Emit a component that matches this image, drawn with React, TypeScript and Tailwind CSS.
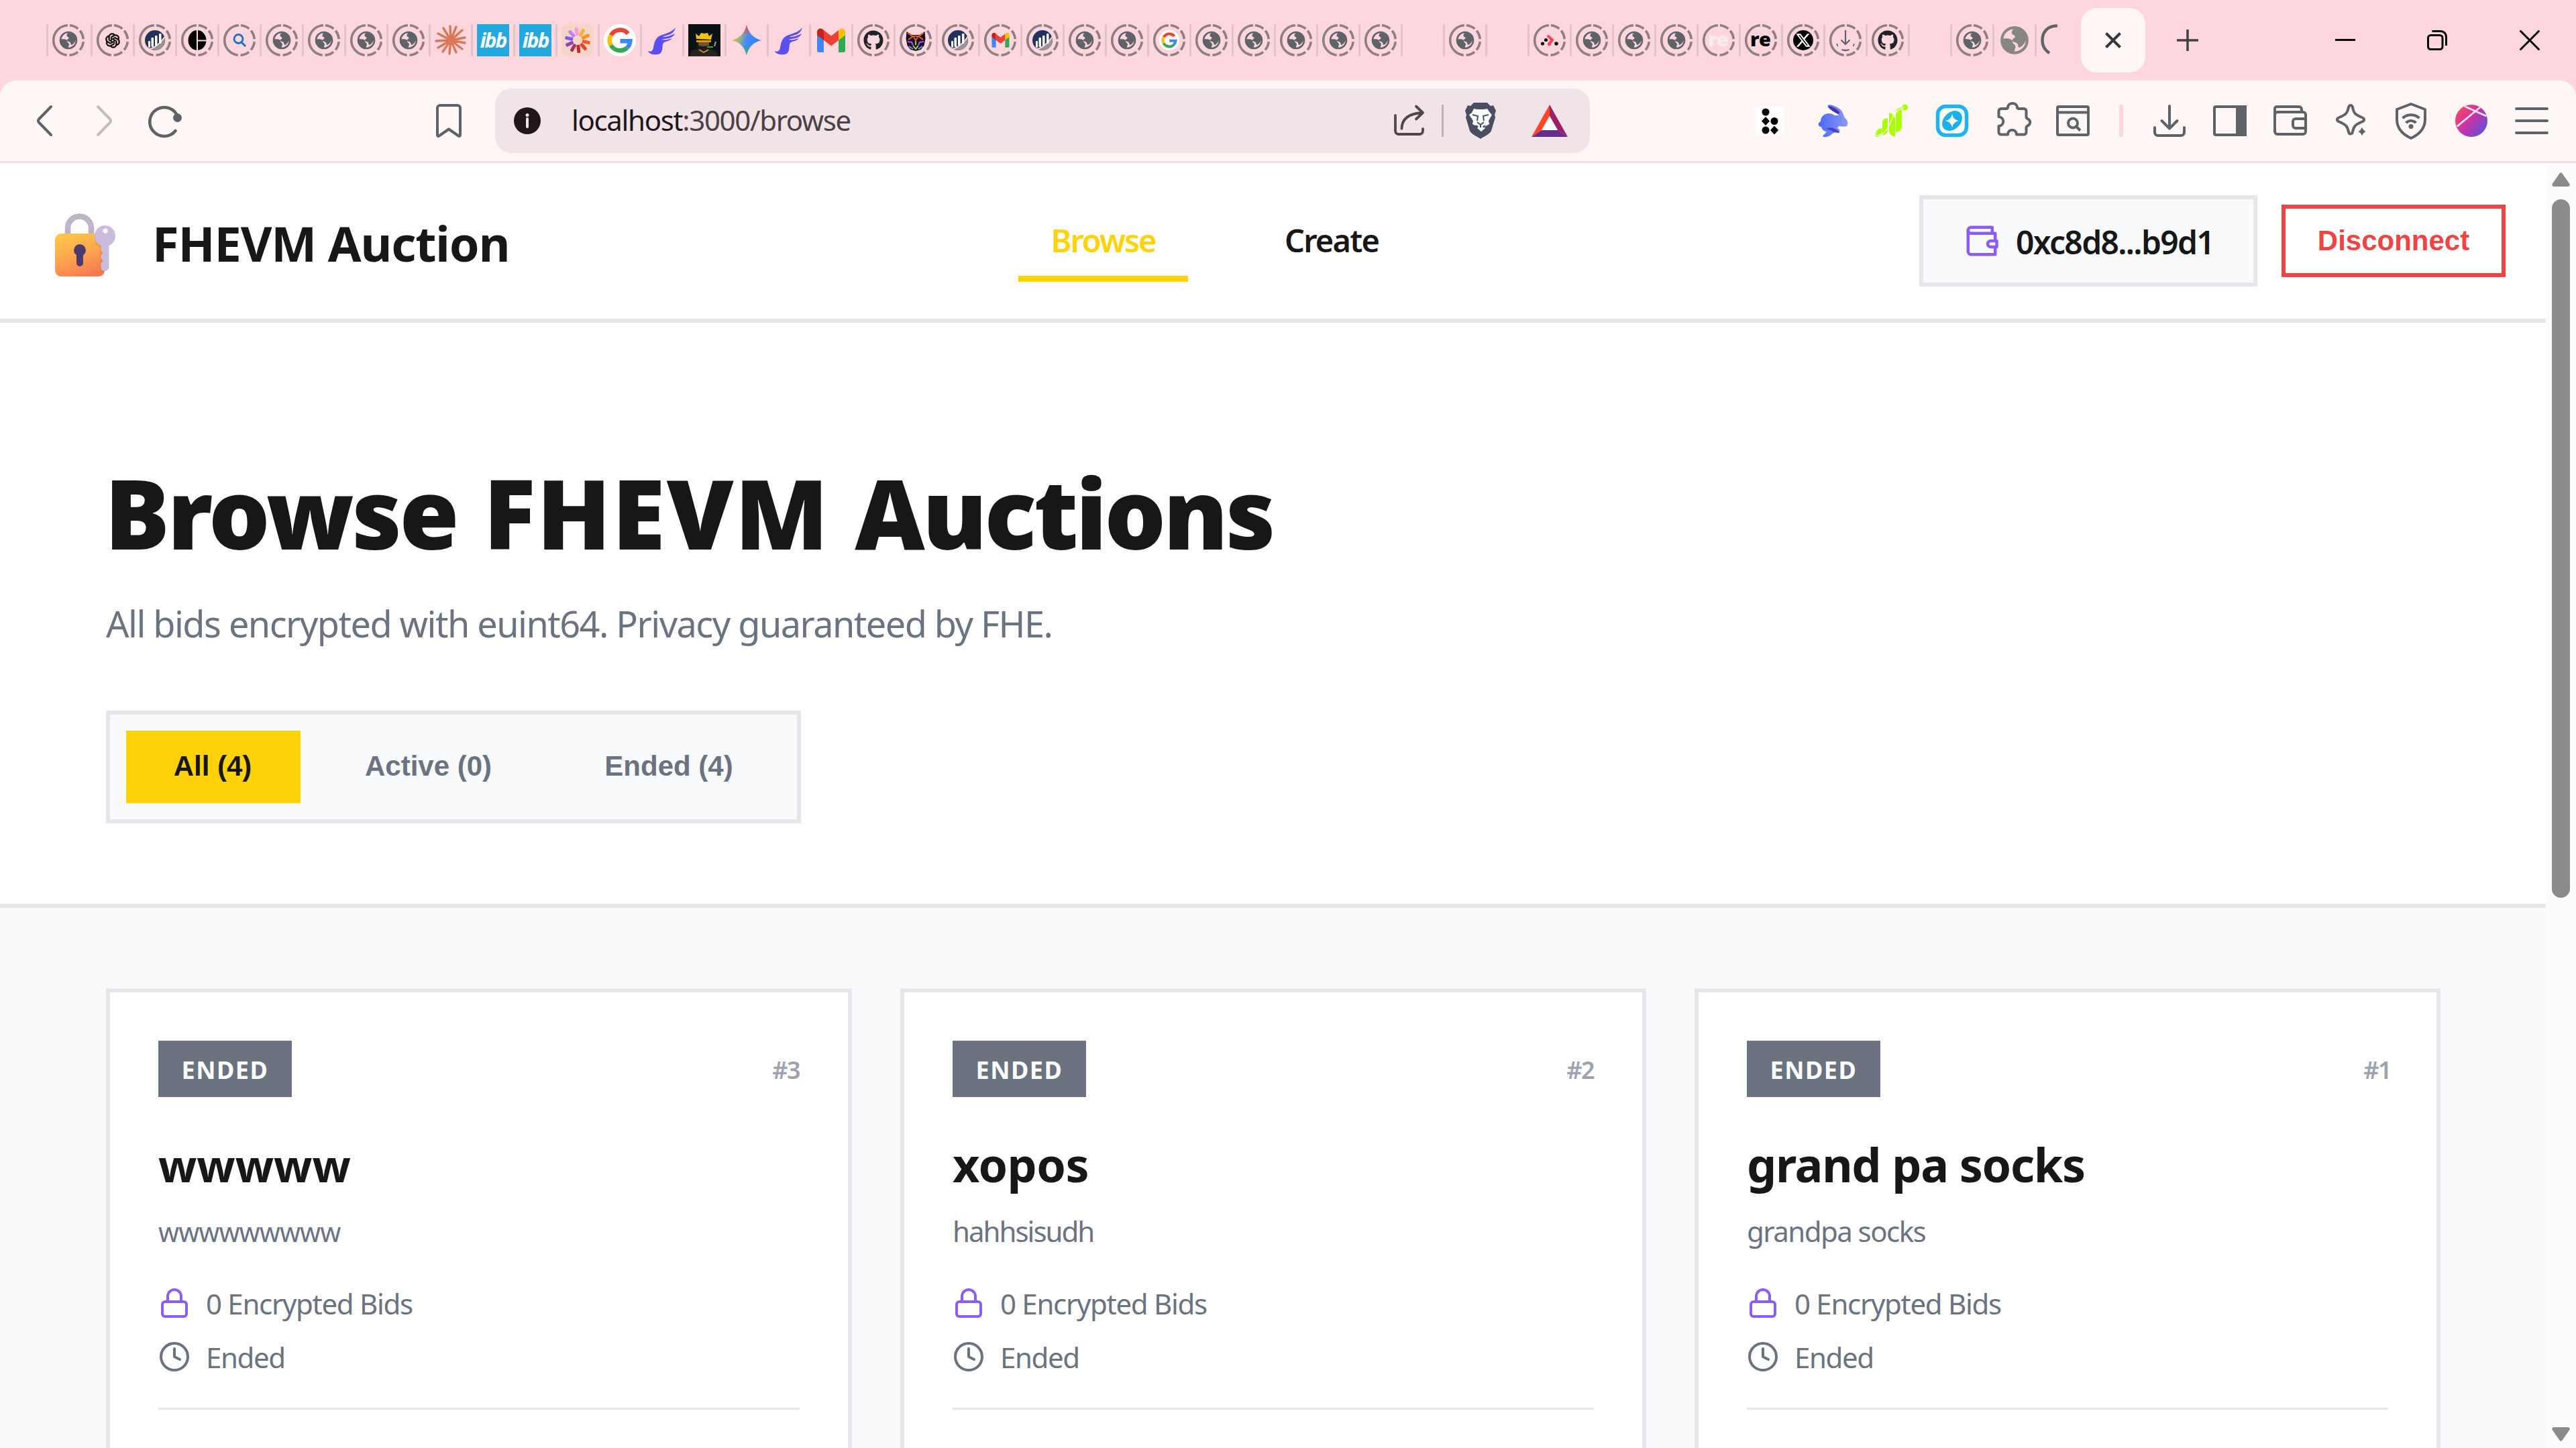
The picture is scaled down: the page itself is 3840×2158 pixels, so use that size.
import type { ReactNode } from "react";
import { Lock, Clock } from "lucide-react";
import { FaGithub, FaXTwitter } from "react-icons/fa6";
import { AiOutlineOpenAI } from "react-icons/ai";

/* ---------- favicons (48 x 48 box) ---------- */

function Fav({ children }: { children: ReactNode }) {
  return (
    <svg viewBox="0 0 48 48" className="size-12 shrink-0 overflow-visible">
      {children}
    </svg>
  );
}

const Ring = () => (
  <circle
    cx="24"
    cy="24"
    r="22.3"
    fill="none"
    stroke="#8f7f83"
    strokeWidth="3.6"
    strokeDasharray="13.5 4 13.5 4 13.5 4 13.5 4 66.1 4"
    transform="rotate(-85 24 24)"
  />
);

function GlobeShape({ color }: { color: string }) {
  return (
    <g>
      <circle cx="24" cy="24" r="12" fill="none" stroke={color} strokeWidth="2.6" />
      <path
        d="M26 11.5c-3 1.5-5 3.5-4.500 6 .5 1.800 2.500 1.200 3 3 .4 1.700-2.500 1.500-2.500 3.500 0 2 3 1.500 4.500 3 1.500 1.600.500 3.500 2 4 2.500-.5 6.500-5 7-9-.5-5-4.500-9.500-9.500-10.500z"
        fill={color}
      />
      <path d="M12 22.500c3-.500 7-.500 9 .800 2 1.400.500 3 2.200 4.200 1.800 1 2.300 2.500 1.300 4.500-.5 1.500-.5 3-1.500 4-6-.5-11-6-11-13.500z" fill={color} />
    </g>
  );
}

const Globe = () => (
  <Fav>
    <Ring />
    <GlobeShape color="#5f6368" />
  </Fav>
);

const OpenAI = () => (
  <div className="relative size-12 shrink-0">
    <Fav>
      <Ring />
    </Fav>
    <AiOutlineOpenAI className="absolute left-[10px] top-[10px] size-[28px] text-black" stroke="#000" strokeWidth="20" />
  </div>
);

const Chart = () => (
  <Fav>
    <Ring />
    <circle cx="24" cy="24" r="15" fill="#21325b" />
    <path d="M38.500 20c2 9-4 18.500-13.500 19-3 0-6-.8-8.500-3 9-.5 17-6 22-16z" fill="#979695" />
    <path d="M12.500 38c10-2 19-8 26-19" stroke="#fed7de" strokeWidth="2" fill="none" />
    <g fill="#fff">
      <rect x="14" y="25" width="3" height="10" rx="1" />
      <rect x="18.500" y="20" width="3.500" height="14" rx="1" />
      <rect x="24" y="17" width="3.500" height="15" rx="1" />
      <rect x="30" y="14" width="3.500" height="15" rx="1" />
    </g>
  </Fav>
);

const SplitDisc = () => (
  <Fav>
    <Ring />
    <ellipse cx="24" cy="24" rx="13.500" ry="15" fill="#000" />
    <path d="M24 8v32M24 24.500h15" stroke="#fed7de" strokeWidth="2" />
  </Fav>
);

const SearchFav = () => (
  <Fav>
    <Ring />
    <circle cx="22.500" cy="22" r="6.500" fill="none" stroke="#1a73c9" strokeWidth="2.800" />
    <path d="M27 27l6 6" stroke="#1a73c9" strokeWidth="3" />
  </Fav>
);

const Claude = () => (
  <Fav>
    <g stroke="#d97757" strokeWidth="3.400" strokeLinecap="round">
      <path d="M24 24L23 3M24 24L32 4M24 24L41 9M24 24l21-4M24 24l21 4M24 24l17 13M24 24l8 18M24 24l-2 20M24 24L12 41M24 24L5 35M24 24L2 25M24 24L5 14M24 24L13 6" />
    </g>
  </Fav>
);

const Ibb = () => (
  <div className="flex size-12 shrink-0 items-center justify-center bg-[#23a8e0]">
    <span className="font-['Open_Sans'] text-[30px] font-bold italic leading-[48px] tracking-[-2px] text-white">ibb</span>
  </div>
);

const burst = ["#f9b233", "#f7931e", "#f15a24", "#e0452c", "#c1272d", "#a8325e", "#8d44ad", "#7b5be6", "#c77dff", "#ff9ad5"];
const Burst = () => (
  <Fav>
    <rect width="48" height="48" rx="9" fill="#f5d5c8" />
    {burst.map((c, i) => (
      <rect key={c} x="21.500" y="5" width="5" height="12" rx="1.500" fill={c} transform={`rotate(${36 * i + 30} 24 24)`} />
    ))}
  </Fav>
);

function GoogleG() {
  return (
    <g fill="none" strokeWidth="6.500">
      <path d="M36.200 14.200A15.500 15.500 0 0 0 10.800 16.500" stroke="#ea4335" />
      <path d="M10.800 16.500A15.500 15.500 0 0 0 10.800 31.500" stroke="#fbbc05" />
      <path d="M10.800 31.500A15.500 15.500 0 0 0 34.500 35.500" stroke="#34a853" />
      <path d="M34.500 35.500A15.500 15.500 0 0 0 39.300 25.200H24.500" stroke="#4285f4" />
    </g>
  );
}

const Google = () => (
  <Fav>
    <circle cx="24" cy="24" r="24" fill="#fff" />
    <GoogleG />
  </Fav>
);

const GoogleRing = () => (
  <Fav>
    <Ring />
    <circle cx="24" cy="24" r="15" fill="#fff" />
    <g transform="translate(9.100 9.100) scale(.62)">
      <GoogleG />
    </g>
  </Fav>
);

const Feather = () => (
  <Fav>
    <path
      d="M3 40c4 2 7 0 8-5 1-6 2-11 6-15 6-6 19-5 27-15-1 4-3 7-6 9-5 3-10 3-13 5 7 0 12-2 18-5-2 4-5 6-9 7-4 1-8 1-11 2 5 1 11 0 16-2-4 5-10 4-13 7-3 4 1 15-8 17C10 46 4 44 3 40z"
      fill="#5b4ff0"
    />
  </Fav>
);

const King = () => (
  <Fav>
    <rect width="48" height="48" fill="#0b1216" />
    <path d="M12 22l-1-8 5 4 3-5 5 1 5-1 2 5 5-4-2 9z" fill="#f4c20d" />
    <path d="M12 24h22v3H12z" fill="#d99a12" />
    <path d="M15 27h16v8H15z" fill="#6f543d" />
    <path d="M13 30c3 4 16 4 20 0v8c-4 5-16 5-20 0z" fill="#1d1c1c" />
    <path d="M2 48c1-8 6-11 12-11l9 4 9-4c7 1 11 4 13 11z" fill="#262322" />
    <path d="M28 34h9" stroke="#3aa335" strokeWidth="2" />
    <path d="M39 33l2-7" stroke="#9aa0a6" strokeWidth="2" />
    <path d="M16 38l7 4 7-4" stroke="#d99a12" strokeWidth="1.600" fill="none" />
  </Fav>
);

const Gemini = () => (
  <Fav>
    <defs>
      <linearGradient id="gem" x1="0" y1=".3" x2="1" y2=".6">
        <stop offset="0" stopColor="#fbbc04" />
        <stop offset=".28" stopColor="#9ab67a" />
        <stop offset=".5" stopColor="#4a8bf5" />
        <stop offset="1" stopColor="#2f7df6" />
      </linearGradient>
      <linearGradient id="gemv" x1="0" y1="0" x2="0" y2="1">
        <stop offset="0" stopColor="#f0434a" />
        <stop offset=".36" stopColor="#f0434a" stopOpacity="0" />
        <stop offset=".65" stopColor="#2fb457" stopOpacity="0" />
        <stop offset="1" stopColor="#2fb457" />
      </linearGradient>
    </defs>
    <path d="M24 1.500C27 13 34 21 46 24 34 27 27 34 24 46 21 34 14 27 2 24 14 21 21 13 24 1.500z" fill="url(#gem)" />
    <path d="M24 1.500C27 13 34 21 46 24 34 27 27 34 24 46 21 34 14 27 2 24 14 21 21 13 24 1.500z" fill="url(#gemv)" />
  </Fav>
);

function GmailShape() {
  return (
    <g>
      <path d="M3 12v27c0 2 1 3 3 3h7V20z" fill="#4285f4" />
      <path d="M45 12v27c0 2-1 3-3 3h-7V20z" fill="#34a853" />
      <path d="M35 12v12l10-7.500V12c0-5-5-7-8.500-4.300z" fill="#fbbc04" />
      <path d="M3 12v4.500L13 24V9L11.500 7.700C8 5 3 7 3 12z" fill="#c5221f" />
      <path d="M13 24V9l11 8.500L35 9v15l-11 8.500z" fill="#ea4335" />
    </g>
  );
}

const Gmail = () => (
  <Fav>
    <GmailShape />
  </Fav>
);

const GmailRing = () => (
  <Fav>
    <Ring />
    <g transform="translate(9.600 8.800) scale(.62)">
      <GmailShape />
    </g>
  </Fav>
);

const Github = () => (
  <div className="relative size-12 shrink-0">
    <Fav>
      <Ring />
    </Fav>
    <FaGithub className="absolute left-[9px] top-[9px] size-[30px] text-[#20242a]" />
  </div>
);

const Fox = () => (
  <Fav>
    <Ring />
    <path d="M10.500 11l8 5h11l8-5 1 11-2 10-5 6-7.500 2-7.500-2-5-6-2-10z" fill="#1c1220" />
    <path d="M12 13l7 5h10l7-5M13 23l6-4M35 23l-6-4M20 18l4 6 4-6" stroke="#f0652f" strokeWidth="1.600" fill="none" />
    <path d="M12 26l6 1 2 4M36 26l-6 1-2 4" stroke="#a855f7" strokeWidth="2" fill="none" />
    <path d="M20 32l4 5 4-5M24 25v6" stroke="#a3e635" strokeWidth="1.800" fill="none" />
    <path d="M14 33l6 4M34 33l-6 4" stroke="#60a5fa" strokeWidth="1.800" />
  </Fav>
);

const Dots = () => (
  <Fav>
    <Ring />
    <path d="M22 18l6 5.500-4.500 6" stroke="#ff4554" strokeWidth="4" fill="none" strokeLinecap="round" />
    <g fill="#0c0c0c">
      <circle cx="18.500" cy="23.500" r="2.600" />
      <circle cx="13.500" cy="29" r="2.600" />
      <circle cx="34" cy="29" r="2.800" />
    </g>
    <circle cx="23.500" cy="29.500" r="2.600" fill="#ff4554" />
  </Fav>
);

function Re({ light }: { light?: boolean }) {
  return (
    <div className="relative size-12 shrink-0">
      <Fav>
        <Ring />
      </Fav>
      <span
        className={
          light
            ? "absolute left-[8px] top-[5px] font-['Noto_Sans'] text-[29px] font-black leading-[34px] text-[#f4eeef]"
            : "absolute left-[8px] top-[5px] font-['Noto_Sans'] text-[29px] font-black leading-[34px] text-black"
        }
      >
        re
      </span>
    </div>
  );
}

const XFav = () => (
  <div className="relative size-12 shrink-0">
    <Fav>
      <Ring />
      <circle cx="24" cy="24" r="15" fill="#000" />
    </Fav>
    <FaXTwitter className="absolute left-[12px] top-[12px] size-[24px] text-white" />
  </div>
);

const DownFav = () => (
  <Fav>
    <Ring />
    <path d="M24 9v20M17.500 23.500L24 30l6.500-6.500" stroke="#5b6078" strokeWidth="2.200" fill="none" />
    <path d="M18.500 38c3.500 1.300 7.500 1.300 11 0" stroke="#5b6078" strokeWidth="2.400" fill="none" />
    <path d="M11 29l1.500 4M37 29l-1.500 4" stroke="#5b6078" strokeWidth="1.600" />
  </Fav>
);

const PlainGlobe = () => (
  <Fav>
    <g transform="translate(-13.700 -13.700) scale(1.570)">
      <GlobeShape color="#868685" />
    </g>
  </Fav>
);

const tabs: (ReactNode | null)[] = [
  <Globe />, <OpenAI />, <Chart />, <SplitDisc />, <SearchFav />, <Globe />, <Globe />, <Globe />, <Globe />,
  <Claude />, <Ibb />, <Ibb />, <Burst />, <Google />, <Feather />, <King />, <Gemini />, <Feather />, <Gmail />,
  <Github />, <Fox />, <Chart />, <GmailRing />, <Chart />, <Globe />, <Globe />, <GoogleRing />, <Globe />, <Globe />,
  <Globe />, <Globe />, <Globe />, null, <Globe />, null, <Dots />, <Globe />, <Globe />, <Globe />, <Re light />, <Re />,
  <XFav />, <DownFav />, <Github />, null, <Globe />, <PlainGlobe />,
];

function TabStrip() {
  return (
    <div className="flex h-[120px] items-center bg-[#fed7de]">
      <div className="ml-[69px] h-12 w-[3px] bg-[#dfc4c9]" />
      {tabs.map((icon, i) => (
        <div key={i} className={i === 0 ? "flex h-12 w-[66px] shrink-0 items-center pl-1.5" : "flex h-12 w-[63px] shrink-0 items-center pl-1.5"}>
          <div className="size-12 shrink-0">{icon}</div>
          <div className={i === 0 ? "ml-[9px] h-12 w-[3px] shrink-0 bg-[#dfc4c9]" : "ml-1.5 h-12 w-[3px] shrink-0 bg-[#dfc4c9]"} />
        </div>
      ))}
      <div className="ml-1.5 h-12 w-[25px] overflow-hidden">
        <svg viewBox="0 0 25 48" className="h-12 w-[25px]">
          <path d="M24 2.500C10 2.500 2.500 12 2.500 24c0 8 3.500 14 9 18" fill="none" stroke="#5f6368" strokeWidth="4.500" strokeLinecap="round" />
        </svg>
      </div>
      <div className="ml-[35px] flex h-24 w-24 items-center justify-center rounded-[24px] bg-[#fff7f6]">
        <svg viewBox="0 0 24 24" className="size-6">
          <path d="M1.500 1.500l21 21M22.500 1.500l-21 21" stroke="#35393d" strokeWidth="4" />
        </svg>
      </div>
      <svg viewBox="0 0 32 32" className="ml-[47px] size-8">
        <path d="M16 0v32M0 16h32" stroke="#3e4246" strokeWidth="3.500" />
      </svg>
      <svg viewBox="0 0 30 30" className="ml-[204px] h-[30px] w-[30px]">
        <path d="M0 14.500h30" stroke="#000" strokeWidth="3" />
      </svg>
      <svg viewBox="0 0 30 30" className="ml-[107px] h-[30px] w-[30px]" fill="none" stroke="#000" strokeWidth="3">
        <rect x="1.500" y="7.500" width="21.500" height="21" rx="4" />
        <path d="M7.500 1.500H20c5 0 8.500 3.500 8.500 8.500v13" />
      </svg>
      <svg viewBox="0 0 30 30" className="ml-[108px] h-[30px] w-[30px]">
        <path d="M.5.5l29 29M29.500.5l-29 29" stroke="#000" strokeWidth="3" />
      </svg>
    </div>
  );
}

/* ---------- toolbar ---------- */

function Cell({ children }: { children: ReactNode }) {
  return (
    <div className="flex h-full w-[90px] shrink-0 items-center justify-center">
      <svg viewBox="0 0 54 54" className="h-[54px] w-[54px] overflow-visible" fill="none" stroke="#5f6368" strokeWidth="4">
        {children}
      </svg>
    </div>
  );
}

function Toolbar() {
  return (
    <div className="h-[123px] bg-[#fed7de]">
      <div className="flex h-[123px] items-center rounded-t-[24px] border-b-[3px] border-[#eedfe0] bg-[#fff7f6]">
        <svg viewBox="0 0 23 46" className="ml-[55px] h-[46px] w-[23px] overflow-visible" fill="none" stroke="#5f6368" strokeWidth="4" strokeLinecap="round">
          <path d="M21 2L3 20.500a3.500 3.500 0 0 0 0 5L21 44" />
        </svg>
        <svg viewBox="0 0 23 46" className="ml-[66px] h-[46px] w-[23px] overflow-visible" fill="none" stroke="#c3bebe" strokeWidth="4" strokeLinecap="round">
          <path d="M2 2l18 18.500a3.500 3.500 0 0 1 0 5L2 44" />
        </svg>
        <svg viewBox="0 0 50 48" className="ml-[54px] h-12 w-[50px] overflow-visible">
          <path d="M40.500 39A21.500 21.500 0 1 1 43.500 17" fill="none" stroke="#5f6368" strokeWidth="4.500" strokeLinecap="round" />
          <circle cx="43.500" cy="19.500" r="6.500" fill="#5f6368" />
        </svg>
        <svg viewBox="0 0 38 50" className="ml-[379px] h-[50px] w-[38px]" fill="none" stroke="#5f6368" strokeWidth="4" strokeLinejoin="round">
          <path d="M2 6a4 4 0 0 1 4-4h26a4 4 0 0 1 4 4v40q0 3-2.500 1.500L19 37.500 4.500 47.500Q2 49 2 46z" />
        </svg>

        <div className="ml-[50px] flex h-24 w-[1632px] items-center rounded-[24px] bg-[#f1e4e9]">
          <svg viewBox="0 0 40 40" className="ml-[28px] size-10">
            <circle cx="20" cy="20" r="20" fill="#201719" />
            <circle cx="20" cy="11.500" r="2.500" fill="#f1e4e9" />
            <path d="M20 17v12" stroke="#f1e4e9" strokeWidth="4" strokeLinecap="round" />
          </svg>
          <div className="ml-[46px] w-[1226px] whitespace-nowrap pb-[3px] font-['Noto_Sans'] text-[42px] leading-[60px] tracking-[-1.35px] text-[#4d4143]">
            <span className="text-[#1f1618]">localhost</span>:3000/browse
          </div>
          <svg viewBox="0 0 46 46" className="h-[46px] w-[46px] overflow-visible" fill="none" stroke="#51464a" strokeWidth="3.800" strokeLinecap="round" strokeLinejoin="round">
            <path d="M2 15v23a5 5 0 0 0 5 5h31a5 5 0 0 0 5-5v-3" />
            <path d="M11.500 34.500C12 20 22 12 42 11M33 1.500l10 9.500-10 9.500" />
          </svg>
          <div className="ml-[25px] h-12 w-[3px] bg-[#b9b2b8]" />
          <svg viewBox="0 0 46 54" className="ml-[32px] h-[54px] w-[46px]">
            <path d="M13 0h20l5 5 4-1 4 8-2 6 1 4-6 20c-2 5-12 9-16 12C19 51 9 47 7 42L1 22l1-4-2-6 4-8 4 1z" fill="#4b4e60" />
            <path d="M13 9l5 1h10l5-1 4 6 3 3-5 9 1 5-7 4 1 2-6 5-6-5 1-2-8-4 1-5-6-9 4-3z" fill="#fff" />
            <path d="M11 18l8 2-1 7M35 18l-8 2 1 7M18 29l5 4 5-4M23 33v4" stroke="#4b4e60" strokeWidth="2" fill="none" />
            <path d="M15 33l5 2-2 3zM31 33l-5 2 2 3z" fill="#4b4e60" />
          </svg>
          <svg viewBox="0 0 54 48" className="ml-[53px] h-12 w-[54px]">
            <path d="M27 0L0 48l15-10 12-21z" fill="#ff4724" />
            <path d="M27 0l27 48-15-10-12-21z" fill="#9e1f63" />
            <path d="M0 48h54L39 38H15z" fill="#662d91" />
            <path d="M27 17l12 21H15z" fill="#fff" />
          </svg>
        </div>

        <div className="ml-auto mr-[21px] flex h-full items-center">
          <Cell>
            <rect x="4" y="6" width="43" height="43" rx="5" fill="#fff" stroke="none" />
            <g fill="#000" stroke="none">
              <circle cx="19" cy="14" r="5.500" />
              <circle cx="32" cy="27.500" r="5.500" />
              <circle cx="19" cy="41" r="5.500" />
              <path d="M19 21l6 6.500-6 6.500-6-6.500zM32 34.500l6 6.500-6 6.500-6-6.500z" />
            </g>
          </Cell>
          <Cell>
            <defs>
              <linearGradient id="rab" x1="0" y1="0" x2="1" y2="0">
                <stop offset="0" stopColor="#4b68ff" />
                <stop offset="1" stopColor="#8b98ec" />
              </linearGradient>
            </defs>
            <path
              stroke="none"
              fill="url(#rab)"
              d="M21.500 4.500C24 1.500 33 5 39 9c5 4 6 9 7.500 13 5 4 5.500 8 4.500 12-3 2.500-9 1.500-13 1l-2 3c3 1 4 3 3 7l-7-1c-4 2-8 7-13 7-6 1-6-2-2-4l3-4c-4 0-7-3-8-7-5 0-6-6-1-8C11 18 22 12 32 19h6c-2-3-6-5-11-8-3-2-6-4-5.500-6.500z"
            />
            <path d="M23 5c6 1 12 4 16 9l-1 3C33 15 24 11 23 5z" fill="#4a2fae" stroke="none" />
            <path d="M19 39c7-4 14-1 19 4l1 2-9-1c-3-3-7-4-11-5z" fill="#3f46c8" stroke="none" />
          </Cell>
          <Cell>
            <g fill="#aaff00" stroke="none">
              <circle cx="46.500" cy="7" r="4.500" />
              <path d="M3 51c0-8 2-13 10-13 0 8-2 13-10 13zM13 48V30c0-4 3-7 8-7v18c0 4-4 8-8 7zM23 15c5 1 9 5 9 9v27c-5-1-9-5-9-9zM33 44V15c0-5 4-8 9-8v28c0 5-4 9-9 9z" />
            </g>
            <path d="M4 49c10-1 16-8 20-17C29 19 34 10 46 7" stroke="#fff7f6" strokeWidth="1.300" />
          </Cell>
          <Cell>
            <rect x="5.500" y="5.500" width="43" height="43" rx="12" fill="#fff" stroke="#21b3ee" strokeWidth="5.500" />
            <ellipse cx="27" cy="27" rx="17" ry="12.500" fill="#1ab0ec" stroke="none" transform="rotate(-45 27 27)" />
            <path d="M27 17q1.500 8.500 10 10-8.500 1.500-10 10-1.500-8.500-10-10 8.500-1.500 10-10z" fill="#fff" stroke="none" />
          </Cell>
          <Cell>
            <path
              strokeLinejoin="round"
              d="M10 9h7c2 0 3-1 3-2.500 1-7.500 13-7.500 14 0C34 8 35 9 37 9h7a3.500 3.500 0 0 1 3.500 3.500V21c0 2 1 2.500 2 3 5 2.500 5 8 0 10.500-1 .5-2 1-2 3V44a3.500 3.500 0 0 1-3.500 3.500H33c0-9-13-9-13 0H10A3.500 3.500 0 0 1 6.500 44v-9c9-1 9-13 0-14v-8.500A3.500 3.500 0 0 1 10 9z"
            />
          </Cell>
          <Cell>
            <rect x="4" y="6" width="46" height="42" rx="2" />
            <path d="M4 14.500h46" strokeWidth="4" />
            <circle cx="27" cy="30.500" r="7" />
            <path d="M32 35.500l6 6" />
          </Cell>
          <div className="flex w-[54px] justify-center">
            <div className="h-12 w-1.5 rounded-full bg-[#fed7de]" />
          </div>
          <Cell>
            <path strokeLinecap="round" strokeLinejoin="round" d="M27 5v33M15.500 27L27 38.500 38.500 27M5 37v7a5 5 0 0 0 5 5h34a5 5 0 0 0 5-5v-7" />
          </Cell>
          <Cell>
            <rect x="4" y="6" width="46" height="42" rx="2" />
            <path d="M38 6h12v42H38z" fill="#5f6368" />
          </Cell>
          <Cell>
            <rect x="4" y="14" width="46" height="33" rx="4" />
            <path d="M4 19V9a3 3 0 0 1 3-3h33a4 4 0 0 1 4 4v4M50 24H35a4 4 0 0 0-4 4v6a4 4 0 0 0 4 4h15" />
          </Cell>
          <Cell>
            <path
              strokeLinejoin="round"
              d="M27 4c1.500 0 2.500 1 3 3 1.500 8 3.500 11 14 15 4 1.500 4 5 0 6.500-10 4-12.500 7-14 15-.8 4-5.200 4-6 0-1.500-8-4-11-14-15-4-1.500-4-5 0-6.500 10-4 12.500-7 14-15 .5-2 1.500-3 3-3z"
            />
            <path d="M44 33q1.500 8.500 9 10-7.500 1.500-9 10-1.500-8.500-9-10 7.500-1.500 9-10z" fill="#5f6368" stroke="#fff7f6" strokeWidth="2" />
          </Cell>
          <Cell>
            <path strokeLinejoin="round" d="M27 2l21 8v15c0 13-8 22-21 28C14 47 6 38 6 25V10z" />
            <path d="M14.500 23c7-6.500 18-6.500 25 0M19.500 30c4.500-4 10.500-4 15 0" />
            <circle cx="27" cy="35.500" r="3.500" fill="#5f6368" stroke="none" />
          </Cell>
          <Cell>
            <defs>
              <linearGradient id="av" x1="0" y1=".1" x2="1" y2=".9">
                <stop offset="0" stopColor="#ff4a5c" />
                <stop offset=".5" stopColor="#c334a8" />
                <stop offset="1" stopColor="#4f55dd" />
              </linearGradient>
            </defs>
            <circle cx="27" cy="27" r="24" fill="url(#av)" stroke="none" />
            <path d="M5.500 35.500L40 7M17 5.500L49.500 20" stroke="#fbe4f4" strokeWidth="2.600" />
          </Cell>
          <Cell>
            <path d="M4 9h46M4 27h46M4 45h46" strokeLinecap="round" />
          </Cell>
        </div>
      </div>
    </div>
  );
}

/* ---------- page ---------- */

const LockKey = () => (
  <svg viewBox="0 0 92 96" className="h-24 w-[92px] overflow-visible">
    <defs>
      <linearGradient id="body" x1=".2" y1="0" x2=".6" y2="1">
        <stop offset="0" stopColor="#ffc84a" />
        <stop offset=".55" stopColor="#fca34f" />
        <stop offset="1" stopColor="#f57a52" />
      </linearGradient>
      <linearGradient id="shackle" x1="0" y1="0" x2="0" y2="1">
        <stop offset="0" stopColor="#b9b7bd" />
        <stop offset=".5" stopColor="#c3b3d2" />
        <stop offset="1" stopColor="#b5b2b8" />
      </linearGradient>
    </defs>
    <path d="M19 34V22a17.500 17.500 0 0 1 35 0v12" fill="none" stroke="url(#shackle)" strokeWidth="8.500" />
    <path d="M9 30h56a9 9 0 0 1 9 9v47a9 9 0 0 1-9 8H9a9 9 0 0 1-9-9V39a9 9 0 0 1 9-9z" fill="url(#body)" />
    <path d="M61 31c-4 9 0 15 6 20v32c0 4 3 6 6 5V38c-1-4-5-8-12-7z" fill="#d9793c" opacity=".4" />
    <path d="M37 46a9 9 0 0 1 5 16.300V74a5 5 0 0 1-10 0V62.300A9 9 0 0 1 37 46z" fill="#4b3a6b" />
    <path fillRule="evenodd" d="M75 18a15.500 15.500 0 0 1 5.500 29.800V80a6.500 6.500 0 0 1-12 3V74l3-3-3-4v-5l3-3-3-4v-7.200A15.500 15.500 0 0 1 75 18zm0 4.500a3.600 3.600 0 1 0 0 7.200 3.600 3.600 0 0 0 0-7.200z" fill="#cbbcdd" />
  </svg>
);

function Header() {
  return (
    <header className="flex h-[238px] items-center border-b-[6px] border-[#e5e7eb] bg-white">
      <div className="flex w-[1518px] items-center pl-[82px]">
        <div className="mt-[14px]">
          <LockKey />
        </div>
        <span className="ml-[53px] mt-1.5 whitespace-nowrap text-[72px] font-bold leading-[96px] tracking-[-1.1px] text-[#171717]">FHEVM Auction</span>
      </div>
      <nav className="flex gap-24 text-[47px] font-semibold leading-[60px]">
        <a className="flex h-[122px] w-[253px] items-center justify-center border-b-[9px] border-[#ffd20a] pt-1.5 tracking-[-2px] text-[#ffd20a]">Browse</a>
        <a className="flex h-[122px] items-center border-b-[9px] border-transparent px-12 pt-1.5 tracking-[-1.8px] text-[#171717]">Create</a>
      </nav>
      <div className="ml-auto mr-[60px] flex items-center gap-9">
        <div className="flex h-[136px] w-[504px] items-center gap-6 border-[6px] border-[#e5e7eb] bg-[#f9fafc] pl-[60px]">
          <svg viewBox="0 0 24 24" className="h-[54px] w-[54px]" fill="none" stroke="#8b5cf6" strokeWidth="2" strokeLinecap="round" strokeLinejoin="round">
            <path d="M21 12V7H5a2 2 0 0 1 0-4h14v4" />
            <path d="M3 5v14a2 2 0 0 0 2 2h16v-5" />
            <path d="M18 12a2 2 0 0 0 0 4h4v-4Z" />
          </svg>
          <span className="whitespace-nowrap pt-[3px] text-[48px] font-semibold leading-[72px] tracking-[-1.7px] text-[#171717]">0xc8d8...b9d1</span>
        </div>
        <button className="flex h-[108px] w-[334px] items-center justify-center border-[6px] border-[#ef4444] bg-white pb-0.5 font-['Liberation_Sans'] text-[42px] font-bold text-[#ef4444]">
          Disconnect
        </button>
      </div>
    </header>
  );
}

function Hero() {
  return (
    <section className="h-[872px] border-b-[6px] border-[#e5e7eb] bg-white px-[158px] pt-[196px]">
      <h1 className="-ml-0.5 whitespace-nowrap text-[144px] font-black leading-[172px] text-[#171717]">
        <span className="tracking-[-3.3px]">Browse</span> <span className="ml-0.5 tracking-[2px]">FHEVM</span>{" "}
        <span className="tracking-[-3.9px]">Auctions</span>
      </h1>
      <p className="mt-[44px] whitespace-nowrap text-[54px] leading-[72px] tracking-[-1.53px] text-[#6b7280]">
        All bids encrypted with euint64. Privacy guaranteed by FHE.
      </p>
      <div className="mt-[94px] flex h-[168px] w-[1036px] gap-6 border-[6px] border-[#e5e7eb] bg-[#f9fafc] p-6 font-['Liberation_Sans'] text-[42px] font-bold text-[#6b7280]">
        <button className="flex w-[260px] items-center justify-center bg-[#ffd20a] pb-[3px] pr-0.5 text-[#171717]">All (4)</button>
        <button className="flex w-[333px] items-center justify-center pb-[3px]">Active (0)</button>
        <button className="flex w-[335px] items-center justify-center pb-[3px] pl-px">Ended (4)</button>
      </div>
    </section>
  );
}

function Card({ id, title, desc }: { id: ReactNode; title: ReactNode; desc: ReactNode }) {
  return (
    <article className="h-[1000px] border-[6px] border-[#e5e7eb] bg-white p-[72px]">
      <div className="flex h-[84px] items-center justify-between">
        <span className="flex h-[84px] w-[199px] items-center justify-center bg-[#6b7280] pt-[3px] text-[36px] font-bold leading-[48px] tracking-[1.5px] text-white">ENDED</span>
        <span className="pt-[3px] text-[36px] font-semibold leading-[48px] tracking-[-1.5px] text-[#9ca3af]">{id}</span>
      </div>
      <h3 className="mt-[52px] h-24 whitespace-nowrap text-[70px] font-bold leading-[96px] text-[#171717]">{title}</h3>
      <p className="mt-[22px] h-[60px] whitespace-nowrap text-[42px] leading-[60px] text-[#6b7280]">{desc}</p>
      <div className="mt-[49px] flex h-14 items-center gap-[23px] text-[42px] leading-[56px] tracking-[-1.3px] text-[#6b7280]">
        <Lock className="size-12 text-[#8b5cf6]" strokeWidth={2} />
        <span className="pt-0.5">0 Encrypted Bids</span>
      </div>
      <div className="mt-6 flex h-14 items-center gap-[23px] text-[42px] leading-[56px] tracking-[-1.4px] text-[#6b7280]">
        <Clock className="size-12" strokeWidth={2} />
        <span className="pt-0.5">Ended</span>
      </div>
      <div className="mt-12 h-[3px] bg-[#e5e7eb]" />
    </article>
  );
}

function Scrollbar() {
  return (
    <div className="flex w-[45px] shrink-0 flex-col items-center bg-[#fcfcfc]">
      <svg viewBox="0 0 27 21" className="mt-[14px] h-[21px] w-[27px] shrink-0">
        <path d="M11.500 1.500q2-2.500 4 0l10.500 15q2 4-2 4.500H3q-4-.5-2-4.500z" fill="#8b8b8b" />
      </svg>
      <div className="mt-[19px] h-[1041px] w-[27px] shrink-0 rounded-full bg-[#8b8b8b]" />
      <svg viewBox="0 0 27 21" className="mb-[10px] mt-auto h-[21px] w-[27px] shrink-0 rotate-180">
        <path d="M11.500 1.500q2-2.500 4 0l10.500 15q2 4-2 4.500H3q-4-.5-2-4.500z" fill="#8b8b8b" />
      </svg>
    </div>
  );
}

export default function App() {
  return (
    <div className="flex h-[2158px] w-[3840px] flex-col overflow-hidden bg-white">
      <TabStrip />
      <Toolbar />
      <div className="flex min-h-0 flex-1">
        <main className="h-full w-[3795px] overflow-hidden font-['Noto_Sans',sans-serif]">
          <Header />
          <Hero />
          <section className="grid grid-cols-3 gap-[72px] bg-[#f9fafc] pl-[158px] pr-[157px] pt-[120px]">
            <Card
              id="#3"
              title={<span className="text-[67px]">wwwww</span>}
              desc={<span className="text-[39.5px] tracking-[-0.9px]">wwwwwwwww</span>}
            />
            <Card
              id="#2"
              title={<span className="tracking-[-0.6px]">xopos</span>}
              desc={<span className="tracking-[-2px]">hahhsisudh</span>}
            />
            <Card
              id={<span className="-mr-1">#1</span>}
              title={<span className="tracking-[-1.3px]">grand pa socks</span>}
              desc={<span className="tracking-[-1.55px]">grandpa socks</span>}
            />
          </section>
        </main>
        <Scrollbar />
      </div>
    </div>
  );
}
